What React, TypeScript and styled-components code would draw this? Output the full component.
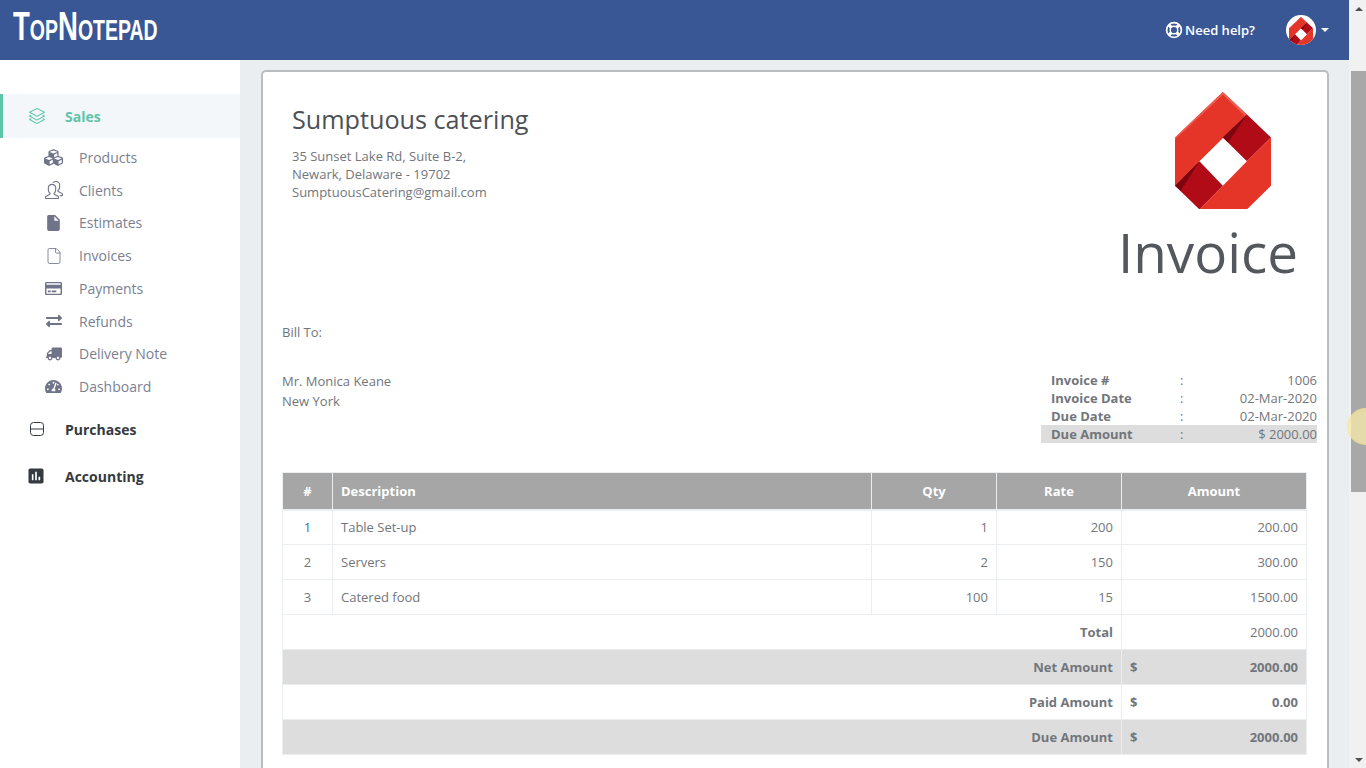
import React from 'react';
import styled, { createGlobalStyle } from 'styled-components';
import { File as FileOutline } from 'lucide-react';
import { FaCubes, FaRegCreditCard, FaExchangeAlt, FaTruck, FaTachometerAlt } from 'react-icons/fa';
import { SlLayers, SlPeople } from 'react-icons/sl';
import { MdAssessment, MdInsertDriveFile } from 'react-icons/md';

const GlobalStyle = createGlobalStyle`
  html, body { margin: 0; height: 100%; overflow: hidden; }
  body { font-family: "Open Sans", "Liberation Sans", sans-serif; font-size: 13px; color: #72767b; }
  * { box-sizing: border-box; }
`;

const Shell = styled.div`
  display: flex;
  width: 1366px;
  height: 768px;
  overflow: hidden;
  position: relative;
`;

const Page = styled.div`
  width: 1349px;
  display: flex;
  flex-direction: column;
  background: #ebeef1;
`;

const Header = styled.header`
  height: 60px;
  flex: none;
  background: #3a5795;
  display: flex;
  align-items: center;
  padding: 0 20px 0 13px;
  color: #fff;
`;

const Wordmark = styled.div`
  font-family: "Liberation Sans Narrow", "Liberation Sans", sans-serif;
  font-variant: small-caps;
  font-weight: 700;
  font-size: 41px;
  line-height: 1;
  transform: scaleX(0.672);
  transform-origin: left center;
  white-space: nowrap;
  margin-top: -7px;
`;

const HeaderRight = styled.div`
  margin-left: auto;
  display: flex;
  align-items: center;
`;

const Help = styled.div`
  display: flex;
  align-items: center;
  gap: 2px;
  font-size: 13px;
  font-weight: 600;
  margin-right: 31px;
`;

const Avatar = styled.div`
  width: 30px;
  height: 30px;
  border-radius: 50%;
  background: #fff;
  display: flex;
  align-items: center;
  justify-content: center;
  padding-top: 3px;
  overflow: hidden;
`;

const Caret = styled.span`
  width: 0;
  height: 0;
  margin-left: 5px;
  border-left: 4px solid transparent;
  border-right: 4px solid transparent;
  border-top: 4px solid #fff;
`;

const Body = styled.div`
  flex: 1;
  display: flex;
  min-height: 0;
`;

const Sidebar = styled.nav`
  width: 240px;
  flex: none;
  background: #fff;
  padding-top: 34px;
`;

const GroupRow = styled.div<{ $active?: boolean; $gap: number }>`
  height: 44px;
  display: flex;
  align-items: center;
  padding-left: ${p => (p.$active ? 26 : 29)}px;
  margin-bottom: ${p => p.$gap}px;
  border-left: ${p => (p.$active ? '3px solid #5fc4a8' : 'none')};
  background: ${p => (p.$active ? '#f4f7fa' : 'transparent')};
  color: ${p => (p.$active ? '#5fc4a8' : '#343a40')};
  font-size: 14px;
  font-weight: 700;
`;

const GroupIcon = styled.span`
  width: 36px;
  display: flex;
  align-items: center;
`;

const AccountingIcon = styled(MdAssessment)`
  margin-left: -3px;
`;

const SubList = styled.div`
  margin-bottom: 4.4px;
`;

const SubRow = styled.div`
  height: 32.75px;
  display: flex;
  align-items: center;
  color: #7a7f92;
  font-size: 14px;
`;

const SubIcon = styled.span`
  width: 79px;
  flex: none;
  display: flex;
  align-items: center;
  justify-content: center;
  padding: 0 16px 0 44px;
  color: #6f7489;
`;

const Content = styled.main`
  flex: 1;
  padding: 10px 20px 0 21px;
  min-width: 0;
`;

const Card = styled.section`
  background: #fff;
  border: 2px solid #bbbcc0;
  border-bottom: none;
  border-radius: 5px 5px 0 0;
  height: 720px;
  padding: 20px 10px 0 19px;
  overflow: hidden;
`;

const TopRow = styled.div`
  display: flex;
  justify-content: space-between;
  height: 230px;
`;

const Company = styled.div`
  padding: 9px 0 0 10px;
`;

const CompanyName = styled.h1`
  margin: 0 0 10px;
  font-size: 25.2px;
  line-height: 36px;
  font-weight: 400;
  color: #4d5156;
`;

const Address = styled.div`
  line-height: 18px;
`;

const Brand = styled.div`
  width: 178px;
  margin-right: 20px;
  display: flex;
  flex-direction: column;
  align-items: center;
`;

const BrandLogo = styled.div`
  align-self: flex-start;
  margin-left: 56px;
  line-height: 0;
`;

const InvoiceTitle = styled.div`
  font-size: 54.8px;
  line-height: 76px;
  color: #54585d;
  margin-top: 5px;
`;

const BillTo = styled.div`
  line-height: 20px;
  margin-bottom: 29px;
`;

const PartyRow = styled.div`
  display: flex;
  justify-content: space-between;
  height: 101px;
`;

const Party = styled.div`
  line-height: 20px;
`;

const Meta = styled.div`
  width: 276px;
`;

const MetaRow = styled.div<{ $shade?: boolean }>`
  display: grid;
  grid-template-columns: 129px 20px 1fr;
  height: 18px;
  line-height: 18px;
  padding-left: 10px;
  background: ${p => (p.$shade ? '#dddddd' : 'transparent')};
`;

const MetaLabel = styled.span`
  font-weight: 700;
`;

const MetaValue = styled.span`
  text-align: right;
`;

const ItemTable = styled.table`
  width: 1024px;
  border-collapse: collapse;
  table-layout: fixed;
  border: 1px solid #ebeef1;
`;

const HeadCell = styled.th<{ $left?: boolean }>`
  height: 37px;
  padding: 0 8px;
  background: #a6a6a6;
  color: #fff;
  font-weight: 700;
  font-size: 13px;
  text-align: ${p => (p.$left ? 'left' : 'center')};
  border-right: 1px solid #ebeef1;
  border-bottom: 2px solid #ebeef1;
`;

const Cell = styled.td<{ $align?: string; $bold?: boolean; $shade?: boolean }>`
  height: 35px;
  padding: 0 8px;
  font-size: 13px;
  text-align: ${p => p.$align || 'left'};
  font-weight: ${p => (p.$bold ? 700 : 400)};
  background: ${p => (p.$shade ? '#dddddd' : 'transparent')};
  border: 1px solid #ebeef1;
`;

const RowLink = styled.span`
  color: #3a6ea5;
`;

const Money = styled.div`
  display: flex;
  justify-content: space-between;
`;

const Scrollbar = styled.div`
  width: 17px;
  flex: none;
  background: #f1f1f1;
  display: flex;
  flex-direction: column;
  align-items: flex-end;
`;

const Arrow = styled.div<{ $down?: boolean }>`
  width: 15px;
  height: 17px;
  flex: none;
  display: flex;
  align-items: center;
  justify-content: center;
  &::after {
    content: '';
    border-left: 4px solid transparent;
    border-right: 4px solid transparent;
    ${p => (p.$down ? 'border-top: 4px solid #505050;' : 'border-bottom: 4px solid #505050;')}
  }
`;

const ScrollSpace = styled.div`
  flex: 1;
  padding-top: 54px;
  width: 15px;
`;

const Thumb = styled.div`
  height: 421px;
  background: #a8a8a8;
`;

const CursorHalo = styled.div`
  position: absolute;
  left: 1347px;
  top: 408px;
  width: 37px;
  height: 37px;
  border-radius: 50%;
  background: radial-gradient(circle, rgba(250, 235, 170, 0.75) 55%, rgba(245, 215, 110, 0.8) 100%);
`;

const Logo = ({ width }: { width: number }) => (
  <svg width={width} height={(width * 351) / 287} viewBox="225 36 287 351" style={{ flex: 'none' }}>
    <polygon fill="#e53528" points="225,172 368,36 440,103 298,243 225,316" />
    <polygon fill="#ee5d52" points="225,172 368,36 440,103 434,108 368,44 225,178" />
    <polygon fill="#b00b16" points="440,103 512,172 440,243 368,172" />
    <polygon fill="#7c0510" points="440,103 368,172 384,187" />
    <polygon fill="#e53528" points="512,172 512,316 440,387 298,387 368,316 440,243" />
    <polygon fill="#b00b16" points="298,243 368,316 298,387 225,316" />
    <polygon fill="#7c0510" points="225,316 298,243 242,331" />
  </svg>
);

const HelpIcon = () => (
  <svg width="18" height="18" viewBox="0 0 18 18" fill="none" stroke="#fff">
    <circle cx="9" cy="9" r="7.4" strokeWidth="1.7" />
    <circle cx="9" cy="9" r="3.8" strokeWidth="1.4" />
    <path d="M3.8 3.8 6.3 6.3M14.2 3.8 11.7 6.3M3.8 14.2 6.3 11.7M14.2 14.2 11.7 11.7" strokeWidth="3.2" />
  </svg>
);

const PurchasesIcon = () => (
  <svg width="14" height="14" viewBox="0 0 14 14" fill="none" stroke="#343a40" style={{ marginLeft: 1 }}>
    <rect x="0.5" y="0.5" width="13" height="13" rx="3" />
    <path d="M1 7H13" />
  </svg>
);

const subItems = [
  { label: 'Products', icon: <FaCubes size={19} /> },
  { label: 'Clients', icon: <SlPeople size={18} /> },
  { label: 'Estimates', icon: <MdInsertDriveFile size={20} /> },
  { label: 'Invoices', icon: <FileOutline size={18} strokeWidth={1.1} /> },
  { label: 'Payments', icon: <FaRegCreditCard size={17} /> },
  { label: 'Refunds', icon: <FaExchangeAlt size={16} /> },
  { label: 'Delivery Note', icon: <FaTruck size={16} style={{ transform: 'scaleX(-1)' }} /> },
  { label: 'Dashboard', icon: <FaTachometerAlt size={17} /> },
];

const meta = [
  { label: 'Invoice #', value: '1006' },
  { label: 'Invoice Date', value: '02-Mar-2020' },
  { label: 'Due Date', value: '02-Mar-2020' },
  { label: 'Due Amount', value: '$ 2000.00', shade: true },
];

const lines = [
  { no: 1, name: 'Table Set-up', qty: 1, rate: 200, amount: '200.00' },
  { no: 2, name: 'Servers', qty: 2, rate: 150, amount: '300.00' },
  { no: 3, name: 'Catered food', qty: 100, rate: 15, amount: '1500.00' },
];

const totals = [
  { label: 'Net Amount', value: '2000.00', shade: true },
  { label: 'Paid Amount', value: '0.00' },
  { label: 'Due Amount', value: '2000.00', shade: true },
];

export default function App() {
  return (
    <Shell>
      <GlobalStyle />
      <Page>
        <Header>
          <Wordmark>TopNotepad</Wordmark>
          <HeaderRight>
            <Help>
              <HelpIcon />
              Need help?
            </Help>
            <Avatar><Logo width={24} /></Avatar>
            <Caret />
          </HeaderRight>
        </Header>
        <Body>
          <Sidebar>
            <GroupRow $active $gap={3}>
              <GroupIcon><SlLayers size={16} /></GroupIcon>
              Sales
            </GroupRow>
            <SubList>
              {subItems.map(item => (
                <SubRow key={item.label}>
                  <SubIcon>{item.icon}</SubIcon>
                  {item.label}
                </SubRow>
              ))}
            </SubList>
            <GroupRow $gap={3}>
              <GroupIcon><PurchasesIcon /></GroupIcon>
              Purchases
            </GroupRow>
            <GroupRow $gap={0}>
              <GroupIcon><AccountingIcon size={20} /></GroupIcon>
              Accounting
            </GroupRow>
          </Sidebar>
          <Content>
            <Card>
              <TopRow>
                <Company>
                  <CompanyName>Sumptuous catering</CompanyName>
                  <Address>
                    35 Sunset Lake Rd, Suite B-2,<br />
                    Newark, Delaware - 19702<br />
                    SumptuousCatering@gmail.com
                  </Address>
                </Company>
                <Brand>
                  <BrandLogo><Logo width={96} /></BrandLogo>
                  <InvoiceTitle>Invoice</InvoiceTitle>
                </Brand>
              </TopRow>
              <BillTo>Bill To:</BillTo>
              <PartyRow>
                <Party>
                  Mr. Monica Keane<br />
                  New York
                </Party>
                <Meta>
                  {meta.map(row => (
                    <MetaRow key={row.label} $shade={row.shade}>
                      <MetaLabel>{row.label}</MetaLabel>
                      <span>:</span>
                      <MetaValue>{row.value}</MetaValue>
                    </MetaRow>
                  ))}
                </Meta>
              </PartyRow>
              <ItemTable>
                <colgroup>
                  <col width={50} />
                  <col width={539} />
                  <col width={125} />
                  <col width={125} />
                  <col width={185} />
                </colgroup>
                <thead>
                  <tr>
                    <HeadCell>#</HeadCell>
                    <HeadCell $left>Description</HeadCell>
                    <HeadCell>Qty</HeadCell>
                    <HeadCell>Rate</HeadCell>
                    <HeadCell>Amount</HeadCell>
                  </tr>
                </thead>
                <tbody>
                  {lines.map(line => (
                    <tr key={line.no}>
                      <Cell $align="center">{line.no === 1 ? <RowLink>{line.no}</RowLink> : line.no}</Cell>
                      <Cell>{line.name}</Cell>
                      <Cell $align="right">{line.qty}</Cell>
                      <Cell $align="right">{line.rate}</Cell>
                      <Cell $align="right">{line.amount}</Cell>
                    </tr>
                  ))}
                  <tr>
                    <Cell colSpan={4} $align="right" $bold>Total</Cell>
                    <Cell $align="right">2000.00</Cell>
                  </tr>
                  {totals.map(row => (
                    <tr key={row.label}>
                      <Cell colSpan={4} $align="right" $bold $shade={row.shade}>{row.label}</Cell>
                      <Cell $bold $shade={row.shade}>
                        <Money><span>$</span><span>{row.value}</span></Money>
                      </Cell>
                    </tr>
                  ))}
                </tbody>
              </ItemTable>
            </Card>
          </Content>
        </Body>
      </Page>
      <Scrollbar>
        <Arrow />
        <ScrollSpace><Thumb /></ScrollSpace>
        <Arrow $down />
      </Scrollbar>
      <CursorHalo />
    </Shell>
  );
}
